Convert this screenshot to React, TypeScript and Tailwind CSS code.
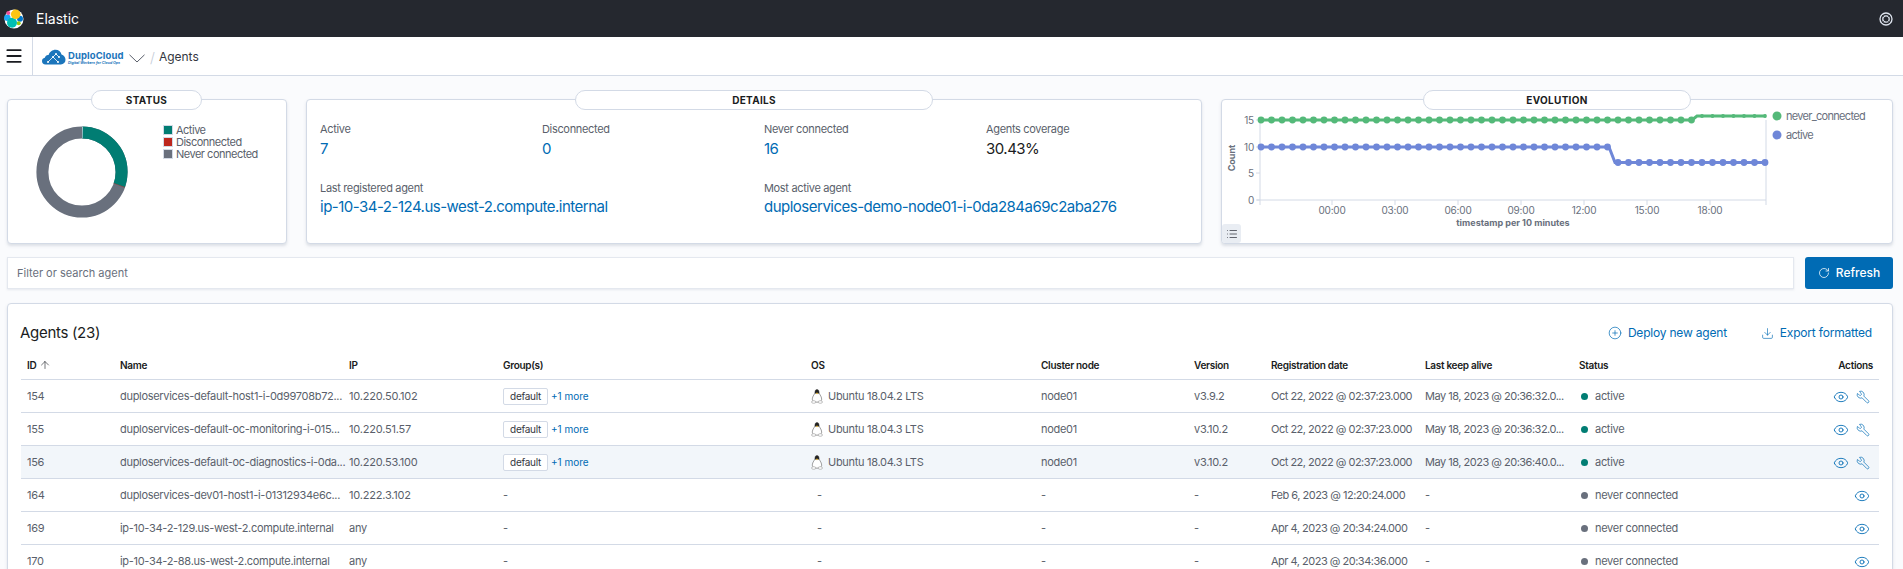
import { Eye, Wrench, RotateCw, CirclePlus, Menu, ArrowUp, List, Download } from 'lucide-react';

type Agent = {
  id: string;
  name: string;
  ip: string;
  os?: string;
  node?: string;
  version?: string;
  registered: string;
  keepAlive?: string;
  active?: boolean;
  highlight?: boolean;
};

const agents: Agent[] = [
  { id: '154', name: 'duploservices-default-host1-i-0d99708b72...', ip: '10.220.50.102', os: 'Ubuntu 18.04.2 LTS', node: 'node01', version: 'v3.9.2', registered: 'Oct 22, 2022 @ 02:37:23.000', keepAlive: 'May 18, 2023 @ 20:36:32.0...', active: true },
  { id: '155', name: 'duploservices-default-oc-monitoring-i-015...', ip: '10.220.51.57', os: 'Ubuntu 18.04.3 LTS', node: 'node01', version: 'v3.10.2', registered: 'Oct 22, 2022 @ 02:37:23.000', keepAlive: 'May 18, 2023 @ 20:36:32.0...', active: true },
  { id: '156', name: 'duploservices-default-oc-diagnostics-i-0da...', ip: '10.220.53.100', os: 'Ubuntu 18.04.3 LTS', node: 'node01', version: 'v3.10.2', registered: 'Oct 22, 2022 @ 02:37:23.000', keepAlive: 'May 18, 2023 @ 20:36:40.0...', active: true, highlight: true },
  { id: '164', name: 'duploservices-dev01-host1-i-01312934e6c...', ip: '10.222.3.102', registered: 'Feb 6, 2023 @ 12:20:24.000' },
  { id: '169', name: 'ip-10-34-2-129.us-west-2.compute.internal', ip: 'any', registered: 'Apr 4, 2023 @ 20:34:24.000' },
  { id: '170', name: 'ip-10-34-2-88.us-west-2.compute.internal', ip: 'any', registered: 'Apr 4, 2023 @ 20:34:36.000' },
];

const ticks = [
  { x: 110, label: '00:00' },
  { x: 173, label: '03:00' },
  { x: 236, label: '06:00' },
  { x: 299, label: '09:00' },
  { x: 362, label: '12:00' },
  { x: 425, label: '15:00' },
  { x: 488, label: '18:00' },
];

function PanelTitle({ title, className }: { title: string; className: string }) {
  return (
    <div className={`absolute top-[-10px] flex h-[20px] items-center justify-center rounded-full border border-[#d3dae6] bg-white text-[10px] font-bold tracking-[0.3px] text-[#1a1c21] ${className}`}>
      {title}
    </div>
  );
}

function ElasticLogo() {
  return (
    <svg width="20" height="21" viewBox="0 0 20 21" className="shrink-0">
      <circle cx="10" cy="11" r="9.500" fill="#fff" />
      <circle cx="3.300" cy="9.700" r="3.200" fill="#1ba9f5" />
      <circle cx="16" cy="10.700" r="3" fill="#0077cc" />
      <circle cx="4.300" cy="5" r="2" fill="#f04e98" />
      <circle cx="14.700" cy="15.300" r="2" fill="#93c90e" />
      <circle cx="8" cy="14.700" r="5" fill="#00bfb3" />
      <circle cx="11.700" cy="6.300" r="4.800" fill="#fec514" />
    </svg>
  );
}

function HelpIcon() {
  return (
    <svg width="14" height="14" viewBox="0 0 14 14" fill="none" stroke="#dfe5ef" className="shrink-0">
      <circle cx="7" cy="7" r="6" strokeWidth="1.300" />
      <circle cx="7" cy="7" r="3.200" strokeWidth="1.300" />
      <path d="M2.800 2.800l2 2M11.200 2.800l-2 2M2.800 11.200l2-2M11.200 11.200l-2-2" stroke="#25282f" strokeWidth="0.800" />
    </svg>
  );
}

function DuploLogo() {
  return (
    <div className="flex items-center gap-[2px]">
      <svg width="24" height="16" viewBox="0 0 24 16">
        <path d="M3.500 15.500C1.300 15.500 0 14 0 12c0-1.800 1.200-3 2.800-3.300C3.300 6.800 5 5.600 6.600 6 7.600 3 10.400.800 13.500.800c3 0 5.400 2 6 4.800 2.400.600 4 2.800 4 5.200 0 2.700-2 4.700-4.600 4.700z" fill="#1b75bb" />
        <path d="M6 13l5-5 3-3M11 8l5 5M14 5l3 3" stroke="#fff" strokeWidth="0.800" fill="none" />
        <circle cx="6" cy="13" r="1" fill="#fff" />
        <circle cx="11" cy="8" r="1" fill="#fff" />
        <circle cx="16" cy="13" r="1" fill="#fff" />
        <circle cx="14" cy="5" r="1" fill="#fff" />
        <circle cx="17" cy="8" r="1" fill="#fff" />
      </svg>
      <div className="flex w-[56px] flex-col">
        <span className="text-[9.500px] leading-[11px] font-bold tracking-[0.1px] text-[#1b75bb]">DuploCloud</span>
        <span className="text-[3.600px] leading-[4px] font-bold whitespace-nowrap text-[#1b75bb] italic">Digital Workers for Cloud Ops</span>
      </div>
    </div>
  );
}

function Penguin() {
  return (
    <svg width="12" height="15" viewBox="0 0 12 15" className="shrink-0">
      <path d="M6 .500C4.600.500 4 1.600 4 3c0 1.200-.400 1.800-1.200 3C2 7.200 1.300 8.800 1.300 10.200c0 1.800 2 3 4.700 3s4.700-1.200 4.700-3C10.700 8.800 10 7.200 9.200 6 8.400 4.800 8 4.200 8 3c0-1.400-.600-2.500-2-2.500z" fill="#fff" stroke="#777" strokeWidth="0.700" />
      <path d="M6 .500C4.600.500 4 1.600 4 3c0 .600-.100 1-.300 1.500h4.600C8.100 4 8 3.600 8 3c0-1.400-.600-2.500-2-2.500z" fill="#222" />
      <path d="M4.700 4.300L6 3.500l1.300.800L6 5.300z" fill="#e8b83a" />
      <ellipse cx="2.700" cy="13" rx="2.200" ry="1.300" fill="#fff" stroke="#999" strokeWidth="0.600" />
      <ellipse cx="9.300" cy="13" rx="2.200" ry="1.300" fill="#fff" stroke="#999" strokeWidth="0.600" />
    </svg>
  );
}

function StatusPanel() {
  return (
    <div className="relative flex h-[145px] w-[280px] shrink-0 items-start gap-[35px] rounded-[4px] border border-[#d3dae6] bg-white pt-[24px] pl-[28px] shadow-[0_2px_3px_rgba(152,162,179,0.3)]">
      <PanelTitle title="STATUS" className="left-[83px] w-[111px]" />
      <svg width="92" height="92" viewBox="0 0 92 92" className="mt-[2px] shrink-0 -rotate-90">
        <circle cx="46" cy="46" r="39.600" fill="none" stroke="#69707d" strokeWidth="12" />
        <circle cx="46" cy="46" r="39.600" fill="none" stroke="#017d73" strokeWidth="12" strokeDasharray="75.700 249" />
        <circle cx="46" cy="46" r="39.600" fill="none" stroke="#bd271e" strokeWidth="12" strokeDasharray="0.600 249" strokeDashoffset="-75.400" opacity="0.6" />
        <circle cx="46" cy="46" r="39.600" fill="none" stroke="#d3dae6" strokeWidth="12" strokeDasharray="0.700 249" />
      </svg>
      <div className="flex flex-col text-[11px] leading-[12px] tracking-[-0.5px] text-[#5a5f6b]">
        {[
          { label: 'Active', color: 'bg-[#017d73]' },
          { label: 'Disconnected', color: 'bg-[#bd271e]' },
          { label: 'Never connected', color: 'bg-[#69707d]' },
        ].map((item) => (
          <div key={item.label} className="flex items-center gap-[3px]">
            <span className={`h-[10px] w-[10px] border border-[#d3dae6] ${item.color}`} />
            {item.label}
          </div>
        ))}
      </div>
    </div>
  );
}

function Stat({ label, value, link = true, span }: { label: string; value: string; link?: boolean; span?: boolean }) {
  return (
    <div className={span ? 'col-span-2' : ''}>
      <p className="text-[11px] leading-[16px] tracking-[-0.33px] text-[#5a5f6b]">{label}</p>
      <p className={`text-[15px] leading-[20px] tracking-[-0.5px] ${span ? 'mt-px' : 'mt-[2px]'} ${link ? 'text-[#006bb4]' : 'text-[#1a1c21]'}`}>{value}</p>
    </div>
  );
}

function DetailsPanel() {
  return (
    <div className="relative h-[145px] w-[896px] shrink-0 rounded-[4px] border border-[#d3dae6] bg-white px-[13px] pt-[21px] shadow-[0_2px_3px_rgba(152,162,179,0.3)]">
      <PanelTitle title="DETAILS" className="left-[268px] w-[358px]" />
      <div className="grid grid-cols-[222px_222px_222px_222px] gap-y-[21px]">
        <Stat label="Active" value="7" />
        <Stat label="Disconnected" value="0" />
        <Stat label="Never connected" value="16" />
        <Stat label="Agents coverage" value="30.43%" link={false} />
        <Stat label="Last registered agent" value="ip-10-34-2-124.us-west-2.compute.internal" span />
        <Stat label="Most active agent" value="duploservices-demo-node01-i-0da284a69c2aba276" span />
      </div>
    </div>
  );
}

function EvolutionChart() {
  const dots: number[] = [];
  for (let x = 0; x <= 505; x += 10.5) dots.push(x + 39);
  const axis = '#d3dae6';
  const label = '#69707d';
  return (
    <svg width="671" height="145" viewBox="0 0 671 145" className="block">
      <line x1="38" y1="20" x2="38" y2="100" stroke={axis} />
      <line x1="35" y1="100" x2="544" y2="100" stroke={axis} />
      <line x1="544" y1="20" x2="544" y2="105" stroke={axis} />
      <line x1="38" y1="100" x2="38" y2="105" stroke={axis} />
      {[{ y: 20, t: '15' }, { y: 47, t: '10' }, { y: 73, t: '5' }, { y: 100, t: '0' }].map((tick) => (
        <g key={tick.t}>
          <line x1="34" y1={tick.y} x2="38" y2={tick.y} stroke={axis} />
          <text x="32" y={tick.y + 3.500} textAnchor="end" fontSize="10" letterSpacing="-0.2" fill={label}>{tick.t}</text>
        </g>
      ))}
      {ticks.map((tick) => (
        <g key={tick.label}>
          <line x1={tick.x} y1="100" x2={tick.x} y2="105" stroke={axis} />
          <text x={tick.x} y="114" textAnchor="middle" fontSize="10" letterSpacing="-0.2" fill={label}>{tick.label}</text>
        </g>
      ))}
      <text x="291" y="126" textAnchor="middle" fontSize="9" fontWeight="700" fill={label}>timestamp per 10 minutes</text>
      <text transform="translate(13 58) rotate(-90)" textAnchor="middle" fontSize="9" fontWeight="700" fill={label}>Count</text>

      <polyline points="38,20 470,20 475,16 544,16" fill="none" stroke="#54b979" strokeWidth="3" />
      <polyline points="38,47 387,47 393,62.500 544,62.500" fill="none" stroke="#6f87d8" strokeWidth="3" />
      {dots.filter((x) => x < 470).map((x) => <circle key={x} cx={x} cy="20" r="3.400" fill="#54b979" />)}
      {dots.filter((x) => x > 478 && x < 544).map((x) => <circle key={x} cx={x} cy="16" r="1.900" fill="#54b979" />)}
      {dots.filter((x) => x < 387).map((x) => <circle key={x} cx={x} cy="47" r="3.400" fill="#6f87d8" />)}
      {dots.filter((x) => x > 393 && x < 544).map((x) => <circle key={x} cx={x} cy="62.500" r="3.400" fill="#6f87d8" />)}

      <circle cx="555" cy="16" r="4.500" fill="#54b979" />
      <text x="564" y="19.500" fontSize="11" letterSpacing="-0.7" fill={label}>never_connected</text>
      <circle cx="555" cy="35" r="4.500" fill="#6f87d8" />
      <text x="564" y="38.500" fontSize="11" letterSpacing="-0.7" fill={label}>active</text>
    </svg>
  );
}

function EvolutionPanel() {
  return (
    <div className="relative h-[145px] w-[672px] shrink-0 rounded-[4px] border border-[#d3dae6] bg-white shadow-[0_2px_3px_rgba(152,162,179,0.3)]">
      <PanelTitle title="EVOLUTION" className="left-[201px] w-[268px]" />
      <EvolutionChart />
      <button className="absolute bottom-0 left-0 flex h-[19px] w-[19px] items-center justify-center rounded-[3px] bg-[#e9edf3] text-[#343741]">
        <List size={12} strokeWidth={1.500} />
      </button>
    </div>
  );
}

function AgentRow({ agent }: { agent: Agent }) {
  return (
    <tr className={`h-[33px] border-b border-[#d3dae6] [&>td]:pt-[2px] ${agent.highlight ? 'bg-[#f2f6fa]' : ''}`}>
      <td className="px-[6px]">{agent.id}</td>
      <td className="px-[6px] whitespace-nowrap">{agent.name}</td>
      <td className="px-[6px] tracking-[-0.2px]">{agent.ip}</td>
      <td className="px-[6px]">
        {agent.os ? (
          <div className="flex items-center gap-[3px]">
            <span className="flex h-[17px] w-[45px] items-center justify-center rounded-[2px] border border-[#d3dae6] bg-white text-[10px] text-[#343741]">default</span>
            <span className="text-[10px] tracking-normal text-[#006bb4]">+1 more</span>
          </div>
        ) : (
          '-'
        )}
      </td>
      <td className="px-[6px]">
        {agent.os ? (
          <div className="flex items-center gap-[5px]">
            <Penguin />
            {agent.os}
          </div>
        ) : (
          <span className="ml-[6px]">-</span>
        )}
      </td>
      <td className="px-[6px]">{agent.node ?? '-'}</td>
      <td className="px-[6px]">{agent.version ?? '-'}</td>
      <td className="px-[6px] tracking-[-0.5px] whitespace-nowrap">{agent.registered}</td>
      <td className="px-[6px] tracking-[-0.5px] whitespace-nowrap">{agent.keepAlive ?? '-'}</td>
      <td className="px-[6px]">
        <div className="flex items-center gap-[7px] pl-[2px]">
          <span className={`h-[7px] w-[7px] rounded-full ${agent.active ? 'bg-[#017d73]' : 'bg-[#69707d]'}`} />
          {agent.active ? 'active' : 'never connected'}
        </div>
      </td>
      <td className="px-[6px]">
        <div className="flex items-center justify-end gap-[7px] pr-[3px] text-[#006bb4]">
          <Eye size={16} strokeWidth={1.300} />
          {agent.active && <Wrench size={14} strokeWidth={1.200} className="-scale-x-100" />}
        </div>
      </td>
    </tr>
  );
}

export default function App() {
  return (
    <div className="h-screen overflow-hidden bg-[#fafbfd] font-['Inter',sans-serif] text-[#5a5f6b]">
      <header className="flex h-[37px] items-center justify-between bg-[#25282f] pr-[10px] pl-[4px]">
        <div className="flex items-center gap-[12px]">
          <ElasticLogo />
          <span className="text-[14px] text-white">Elastic</span>
        </div>
        <HelpIcon />
      </header>

      <nav className="flex h-[39px] items-center border-b border-[#d3dae6] bg-white">
        <div className="flex h-full w-[33px] items-center justify-center border-r border-[#d3dae6] pr-[5px]">
          <Menu size={20} strokeWidth={2.200} className="text-[#1a1c21]" />
        </div>
        <div className="ml-[9px] flex items-center pt-[2px]">
          <DuploLogo />
          <svg width="16" height="9" viewBox="0 0 16 9" fill="none" stroke="#5a5f6b" strokeWidth="1" className="mt-[3px] ml-[5px] shrink-0">
            <polyline points="0.500,0.800 8,8 15.500,0.800" />
          </svg>
          <span className="ml-[5px] text-[14px] font-light text-[#c4ccd8]">/</span>
          <span className="ml-[4px] text-[12px] text-[#343741]">Agents</span>
        </div>
      </nav>

      <main className="px-[7px] pt-[23px]">
        <section className="flex gap-[19px]">
          <StatusPanel />
          <DetailsPanel />
          <EvolutionPanel />
        </section>

        <section className="mt-[13px] flex gap-[11px]">
          <div className="flex h-[32px] w-[1787px] items-center border border-[#e4e8ef] bg-white px-[9px] text-[11px] text-[#69707d] shadow-[0_1px_2px_rgba(152,162,179,0.2)]">
            Filter or search agent
          </div>
          <button className="flex h-[32px] w-[88px] items-center justify-center gap-[6px] rounded-[3px] bg-[#006bb4] text-[12px] font-medium text-white">
            <RotateCw size={12} strokeWidth={1.500} />
            Refresh
          </button>
        </section>

        <section className="mt-[14px] w-[1886px] rounded-[4px] border border-[#d3dae6] bg-white px-[13px] pb-[20px] shadow-[0_2px_3px_rgba(152,162,179,0.3)]">
          <div className="flex h-[48px] items-start justify-between pt-[17px] pr-[7px]">
            <h2 className="-ml-px text-[15px] leading-[24px] tracking-[-0.3px] text-[#1a1c21]">Agents (23)</h2>
            <div className="flex h-[24px] items-center text-[12px] tracking-[-0.2px] text-[#006bb4]">
              <CirclePlus size={14} strokeWidth={1.200} />
              <span className="ml-[6px]">Deploy new agent</span>
              <Download size={13} strokeWidth={1.200} className="ml-[34px]" />
              <span className="ml-[6px]">Export formatted</span>
            </div>
          </div>

          <table className="w-[1858px] table-fixed border-collapse text-left text-[11px] tracking-[-0.3px]">
            <colgroup>
              <col className="w-[93px]" />
              <col className="w-[229px]" />
              <col className="w-[154px]" />
              <col className="w-[308px]" />
              <col className="w-[230px]" />
              <col className="w-[153px]" />
              <col className="w-[77px]" />
              <col className="w-[154px]" />
              <col className="w-[154px]" />
              <col className="w-[231px]" />
              <col className="w-[75px]" />
            </colgroup>
            <thead>
              <tr className="h-[27px] border-b border-[#d3dae6] text-[10px] text-[#1a1c21]">
                <th className="px-[6px] font-semibold">
                  <span className="flex items-center gap-[3px]">ID <ArrowUp size={12} strokeWidth={1.200} /></span>
                </th>
                {['Name', 'IP', 'Group(s)', 'OS', 'Cluster node', 'Version', 'Registration date', 'Last keep alive', 'Status'].map((col) => (
                  <th key={col} className="px-[6px] font-semibold">{col}</th>
                ))}
                <th className="px-[6px] text-right font-semibold">Actions</th>
              </tr>
            </thead>
            <tbody>
              {agents.map((agent) => (
                <AgentRow key={agent.id} agent={agent} />
              ))}
            </tbody>
          </table>
        </section>
      </main>
    </div>
  );
}
